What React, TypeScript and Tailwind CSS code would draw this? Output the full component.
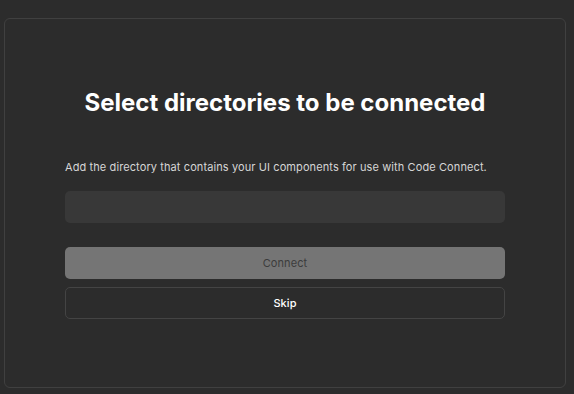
import React from "react";

function App() {
  return (
    <div
      className="w-[574px] h-[394px] bg-[#2c2c2c] pt-[18px] px-[4px] overflow-hidden"
      style={{ fontFamily: "Inter, 'Liberation Sans', sans-serif" }}
    >
      <div className="h-[370px] w-[562px] rounded-[6px] border border-[#404040] flex flex-col items-center">
        <h1 className="mt-[68px] text-[24px] leading-[32px] font-bold text-white">
          Select directories to be connected
        </h1>
        <div className="w-[440px] mt-[40px] flex flex-col">
          <p className="text-[11px] leading-[16px] tracking-[0.1px] text-[#d6d6d6]">
            Add the directory that contains your UI components for use with Code Connect.
          </p>
          <div className="mt-[16px] h-[32px] rounded-[5px] bg-[#383838]" />
          <button className="mt-[24px] h-[32px] rounded-[5px] bg-[#757575] text-[11px] tracking-[0.1px] text-[#3c3c3c]">
            Connect
          </button>
          <button className="mt-[8px] h-[32px] rounded-[5px] border border-[#444444] text-[11px] tracking-[0.1px] font-medium text-white">
            Skip
          </button>
        </div>
      </div>
    </div>
  );
}

export default App;
